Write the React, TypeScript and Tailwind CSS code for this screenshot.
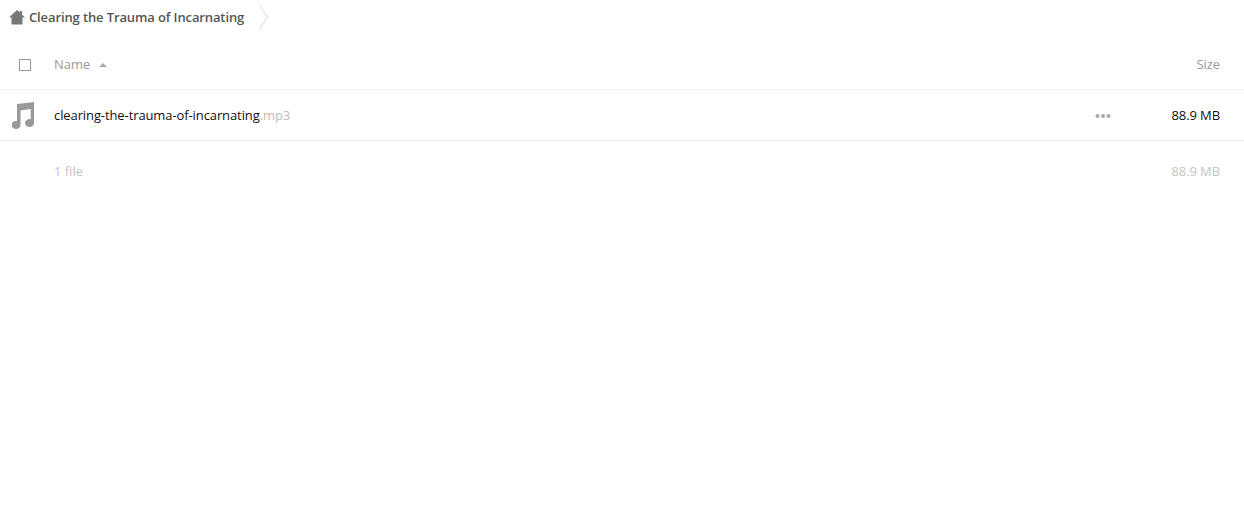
export default function App() {
  return (
    <div className="min-h-[512px] bg-white text-[13px] font-['Open_Sans',sans-serif]">
      <div className="flex h-[34px] items-center pl-[9px]">
        <svg width="16" height="15" viewBox="0 0 16 15" className="shrink-0">
          <path d="M8 0 L11 2.5 V1 H13 V4.5 L16 7.5 H13.5 V14.5 H2.5 V7.5 H0 Z" fill="#777777" />
        </svg>
        <span className="ml-1 translate-y-px font-semibold tracking-[-0.12px] text-[#555]">Clearing the Trauma of Incarnating</span>
        <svg width="10" height="26" viewBox="0 0 10 26" className="ml-[15px] shrink-0">
          <path d="M0.5 0.5 L8.5 13 L0.5 25.5" fill="none" stroke="#d9d9d9" strokeWidth="1" />
        </svg>
      </div>
      <div className="mt-[6px] flex h-[50px] items-center border-b border-[#eeeeee] pr-6">
        <div className="flex w-[54px] shrink-0 justify-center pr-[4px]">
          <div className="h-3 w-3 border border-[#999] bg-white" />
        </div>
        <span className="text-[#999]">Name</span>
        <svg width="8" height="4" viewBox="0 0 8 4" className="ml-[9px]">
          <path d="M4 0 L8 4 H0 Z" fill="#aaa" />
        </svg>
        <span className="ml-auto tracking-[-0.1px] text-[#999]">Size</span>
      </div>
      <div className="flex h-[51px] items-center border-b border-[#eeeeee] pr-6">
        <div className="flex w-[54px] shrink-0 justify-center pr-[9px]">
          <svg width="22" height="27" viewBox="0 0 22 27">
            <path d="M5 2 L22 0 V21 A4.5 4 0 1 1 18.7 17.2 V7 L8.5 8.5 V23 A4.5 4 0 1 1 5 19 Z" fill="#999999" />
          </svg>
        </div>
        <span className="translate-y-px tracking-[-0.1px] text-[#111]">clearing-the-trauma-of-incarnating</span>
        <span className="translate-y-px tracking-[-0.1px] text-[#bbb]">.mp3</span>
        <svg width="16" height="4" viewBox="0 0 16 4" className="ml-auto mr-[61px] translate-y-px">
          <circle cx="2.5" cy="2" r="2" fill="#aaa" />
          <circle cx="8" cy="2" r="2" fill="#aaa" />
          <circle cx="13.5" cy="2" r="2" fill="#aaa" />
        </svg>
        <span className="translate-y-px tracking-[-0.1px] text-[#111]">88.9 MB</span>
      </div>
      <div className="flex h-[61px] items-center pl-[54px] pr-6 text-[#c4c4c4]">
        <span>1 file</span>
        <span className="ml-auto tracking-[-0.1px]">88.9 MB</span>
      </div>
    </div>
  );
}
